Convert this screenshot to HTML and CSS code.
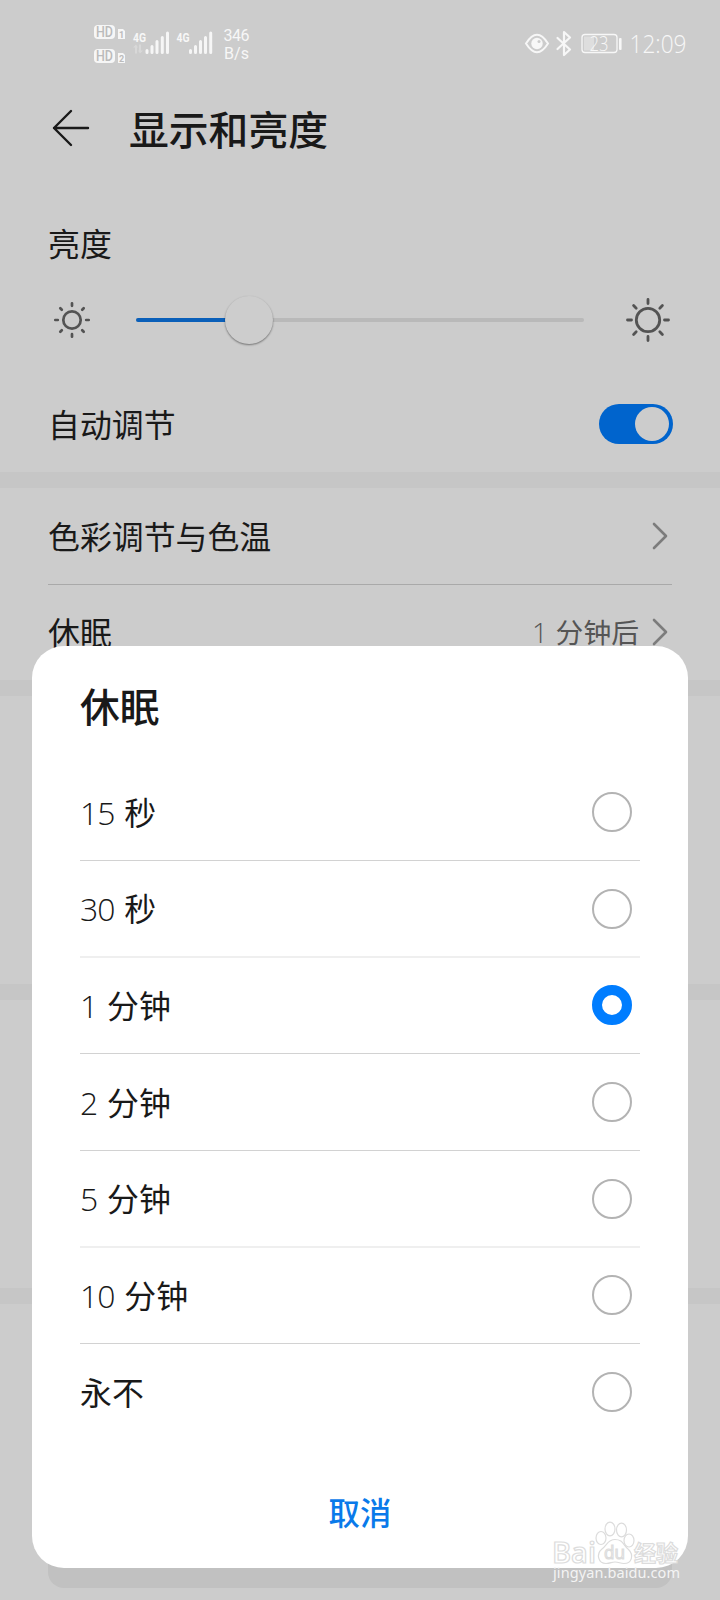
FILE: index.html
```html
<!DOCTYPE html>
<html lang="zh-CN">
<head>
<meta charset="utf-8">
<title>显示和亮度</title>
<link rel="stylesheet" href="styles.css">
</head>
<body>
<div class="screen">
  <header class="status">
    <svg class="status-left" width="170" height="48" viewBox="0 0 170 48" fill="#f6f6f6">
      <rect x="4" y="9" width="21" height="14" rx="4"/>
      <rect x="4" y="33" width="21" height="14" rx="4"/>
      <text class="hd" x="6" y="21" textLength="17" lengthAdjust="spacingAndGlyphs">HD</text>
      <text class="hd" x="6" y="45" textLength="17" lengthAdjust="spacingAndGlyphs">HD</text>
      <path d="M28 13h5l2 2v8h-7zM28 37h5l2 2v8h-7z"/>
      <text class="sim" x="29" y="21.500">1</text>
      <text class="sim" x="29" y="45.500">2</text>
      <text class="gen" x="43" y="26.200" textLength="13" lengthAdjust="spacingAndGlyphs">4G</text>
      <text class="gen" x="86.5" y="26.200" textLength="13" lengthAdjust="spacingAndGlyphs">4G</text>
      <path opacity=".3" d="M46 28.500l-3 3h2v6h2v-6h1zM50 37.500l3-3h-2v-6h-2v6h-1z"/>
      <g stroke="#f6f6f6" stroke-width="3" stroke-linecap="round">
        <path d="M57 36.5v-2M62 36.5v-6M67 36.5v-11M72.3 36.5v-15M77.5 36.5v-19.500"/>
        <path d="M100.500 36.5v-2M105.500 36.5v-6M110.500 36.5v-11M115.500 36.5v-15M120.700 36.5v-19.500"/>
      </g>
      <text class="speed" x="133.500" y="24.500" textLength="26">346</text>
      <text class="speed" x="134" y="43" textLength="25">B/s</text>
    </svg>
    <svg class="status-right" width="170" height="40" viewBox="0 0 170 40" fill="none" stroke="#f7f7f7">
      <path stroke-width="2" d="M6 19.500Q17 2 28 19.500Q17 37 6 19.500z"/>
      <circle cx="17" cy="19.500" r="5.700" fill="#f7f7f7" stroke="none"/>
      <circle cx="19" cy="17.500" r="1.500" fill="#ccc" stroke="none"/>
      <path stroke-width="2.200" stroke-linejoin="round" stroke-linecap="round" d="M37.500 14l12.500 11.500l-6 5.500v-23l6 5.500l-12.500 11.500"/>
      <rect x="62" y="10.500" width="35" height="18" rx="3" stroke-width="1.300"/>
      <rect x="64" y="12.500" width="10" height="14" fill="#dedede" stroke="none"/>
      <rect x="99" y="14" width="2.600" height="12" rx="1" fill="#f7f7f7" stroke="none"/>
      <text class="battery" x="69.500" y="26.500" textLength="19" lengthAdjust="spacingAndGlyphs">23</text>
      <text class="clock" x="109.500" y="28.500" textLength="57" lengthAdjust="spacingAndGlyphs">12:09</text>
    </svg>
  </header>

  <div class="titlebar">
    <svg width="40" height="40" viewBox="0 0 40 40" fill="none" stroke="#191919" stroke-width="2.400" stroke-linecap="round" stroke-linejoin="round"><path d="M20 3L3 20L20 37M3 20H37"/></svg>
    <h1>显示和亮度</h1>
  </div>

  <section class="panel brightness">
    <div class="label">亮度</div>
    <div class="slider">
      <svg width="48" height="48" viewBox="-24 -24 48 48" fill="none" stroke="#535353" stroke-width="2.700" stroke-linecap="round">
        <circle r="8.700"/>
        <path d="M0-16.700v2.500M0 16.700v-2.500M-16.700 0h2.500M16.700 0h-2.500M-11.700-11.700l1.500 1.500M11.700-11.700l-1.500 1.500M-11.700 11.700l1.500-1.500M11.700 11.700l-1.500-1.500"/>
      </svg>
      <div class="track"><div class="fill"></div><div class="thumb"></div></div>
      <svg width="48" height="48" viewBox="-24 -24 48 48" fill="none" stroke="#535353" stroke-width="2.800" stroke-linecap="round">
        <circle r="11.700"/>
        <path d="M0-20.500v4M0 20.500v-4M-20.500 0h4M20.500 0h-4M-14.400-14.400l2.600 2.600M14.400-14.400l-2.600 2.600M-14.400 14.400l2.600-2.600M14.400 14.400l-2.600-2.600"/>
      </svg>
    </div>
    <div class="auto"><span>自动调节</span><span class="toggle"></span></div>
  </section>

  <section class="panel links">
    <div class="link"><span>色彩调节与色温</span>
      <svg width="16" height="28" viewBox="0 0 16 28" class="chevron"><path d="M2 2L14 14L2 26"/></svg></div>
    <div class="link"><span>休眠</span><span class="value"><b class="num">1</b>分钟后</span>
      <svg width="16" height="28" viewBox="0 0 16 28" class="chevron"><path d="M2 2L14 14L2 26"/></svg></div>
  </section>
  <section class="panel blank"></section>
  <section class="panel blank"></section>
  <section class="panel tail"><div class="tip"></div></section>

  <div class="dialog">
    <h2>休眠</h2>
    <ul class="options">
      <li><span><b class="num">15</b>秒</span><i class="radio"></i></li>
      <li><span><b class="num">30</b>秒</span><i class="radio"></i></li>
      <li><span><b class="num">1</b>分钟</span><i class="radio checked"></i></li>
      <li><span><b class="num">2</b>分钟</span><i class="radio"></i></li>
      <li><span><b class="num">5</b>分钟</span><i class="radio"></i></li>
      <li><span><b class="num">10</b>分钟</span><i class="radio"></i></li>
      <li><span>永不</span><i class="radio"></i></li>
    </ul>
    <button class="cancel">取消</button>
  </div>

  <svg class="watermark" width="140" height="70" viewBox="0 0 140 70">
    <g fill="#fff" stroke="#dcdcdc" stroke-width="1.200">
      <text class="brand" x="2" y="42.500" textLength="44" lengthAdjust="spacingAndGlyphs">Bai</text>
      <ellipse cx="51" cy="18" rx="5" ry="6.500"/>
      <ellipse cx="60" cy="9" rx="5" ry="6.800"/>
      <ellipse cx="71.500" cy="10" rx="5" ry="6.800"/>
      <ellipse cx="79" cy="20.500" rx="5" ry="6.500"/>
      <path d="M65 19.500C58 19.500 57 25 52 29C46 34 48 43.500 56 43.500C61 43.500 61 42 65 42C69 42 70 43.500 74 43.500C82 43.500 84 35 78.500 29.500C73 25 73 19.500 65 19.500z"/>
      <text class="du" x="54" y="38.500" textLength="21" lengthAdjust="spacingAndGlyphs">du</text>
      <text class="jy" x="84" y="40.500" textLength="44">经验</text>
    </g>
    <text class="url" x="3" y="58" textLength="127">jingyan.baidu.com</text>
  </svg>
</div>
</body>
</html>
```
FILE: styles.css
```css
* { box-sizing: border-box; }
body { margin: 0; }
.screen {
  position: relative;
  width: 720px;
  height: 1600px;
  overflow: hidden;
  background: #c6c6c6;
  color: #191919;
  font: 400 31.9px/48px "Noto Sans CJK SC", sans-serif;
  display: flex;
  flex-direction: column;
}
h1, h2 { margin: 0; font-size: 39.8px; font-weight: 500; line-height: 60px; }
.num {
  display: inline-block;
  font: 300 1em/1 "Open Sans", sans-serif;
  letter-spacing: -1px;
  margin-right: .31em;
}

/* Status bar */
.status {
  height: 80px;
  flex: none;
  background: #ccc;
  display: flex;
  justify-content: space-between;
  padding: 16px 30px 0 90px;
}
.status svg { overflow: visible; }
.status-right { margin-top: 8px; }
.status text { stroke: none; fill: #f7f7f7; }
.status .hd { font: 500 14px Roboto, sans-serif; fill: #bbb; }
.status .sim { font: 700 9px Roboto, sans-serif; fill: #bbb; }
.gen { font: 700 13.5px Roboto, sans-serif; }
.speed { font: 400 16px Roboto, sans-serif; }
.battery { font: 300 20px "Open Sans", sans-serif; }
.clock { font: 300 25px "Open Sans", sans-serif; }

.titlebar {
  height: 96px;
  flex: none;
  background: #ccc;
  display: flex;
  align-items: center;
  gap: 38px;
  padding: 0 51px;
}
.titlebar h1 { margin-top: -1px; }

.panel { background: #ccc; flex: none; margin-bottom: 16px; padding: 0 48px; }
.brightness { height: 296px; padding-top: 42px; }
.label { height: 78px; }
.slider { height: 48px; display: flex; align-items: center; gap: 40px; }
.slider svg { flex: none; }
.track {
  position: relative;
  width: 448px;
  height: 4px;
  border-radius: 2px;
  background: #b9b9b9;
}
.fill { width: 113px; height: 4px; border-radius: 2px; background: #0a5fb9; }
.thumb {
  position: absolute;
  left: 89px;
  top: -22px;
  width: 48px;
  height: 48px;
  border-radius: 50%;
  background: #cdcdcd;
  box-shadow: 0 1px 2px rgba(0, 0, 0, .45);
}
.auto { margin-top: 56px; height: 48px; display: flex; justify-content: space-between; align-items: center; }
.auto span:first-child { padding-bottom: 2px; }
.toggle {
  width: 74px;
  height: 40px;
  border-radius: 20px;
  background: #0064cd;
  padding: 3px 4px;
  display: flex;
  justify-content: flex-end;
  margin-right: -1px;
}
.toggle::after { content: ""; width: 34px; height: 34px; border-radius: 50%; background: #ccc; }

.links { height: 192px; }
.link { height: 96px; display: flex; align-items: center; }
.link + .link { border-top: 1px solid #a9a9a9; padding-bottom: 1px; }
.link > :first-child { flex: 1; padding-bottom: 2px; }
.value { font-size: 27.8px; color: #555; margin-right: 13px; padding-bottom: 2px; }
.chevron { margin-right: 4px; fill: none; stroke: #7c7c7c; stroke-width: 2.6; stroke-linecap: round; stroke-linejoin: round; }

.blank { height: 288px; }
.tail { height: 296px; margin: 0; display: flex; align-items: flex-end; padding-bottom: 12px; }
.tip { flex: 1; height: 120px; border-radius: 16px; background: #c1c1c1; }

/* Bottom sheet */
.dialog {
  position: absolute;
  left: 32px;
  top: 646px;
  width: 656px;
  height: 922px;
  border-radius: 32px;
  background: #fff;
  padding: 29px 48px 0;
  display: flex;
  flex-direction: column;
}
.options { list-style: none; margin: 29px 0 0; padding: 0; }
.options li {
  height: 97px;
  display: flex;
  align-items: center;
  justify-content: space-between;
  padding-right: 8px;
}
.options li span { padding-bottom: 3px; }
.options li:first-child, .options li:nth-child(3n + 2) { height: 96px; }
.options li + li { border-top: 1px solid #d2d2d2; }
.options li:nth-child(3n + 3) { border-top: 2px solid #efefef; padding-bottom: 1px; }
.radio { width: 40px; height: 40px; border: 2px solid #b3b3b3; border-radius: 50%; }
.radio.checked { border: 10px solid #007dff; }
.cancel {
  align-self: center;
  margin-top: 48px;
  padding: 0;
  border: 0;
  background: none;
  color: #0a7aea;
  font: 500 31.4px/48px "Noto Sans CJK SC", sans-serif;
}

.watermark { position: absolute; left: 550px; top: 1520px; }
.brand { font: 600 28px "Open Sans", sans-serif; }
.du { font: 400 18px "Open Sans", sans-serif; }
.jy { font: 700 22px "Noto Sans CJK SC", sans-serif; }
.url { font: 400 14.5px "Noto Sans", sans-serif; fill: #f4f4f4; }
```
